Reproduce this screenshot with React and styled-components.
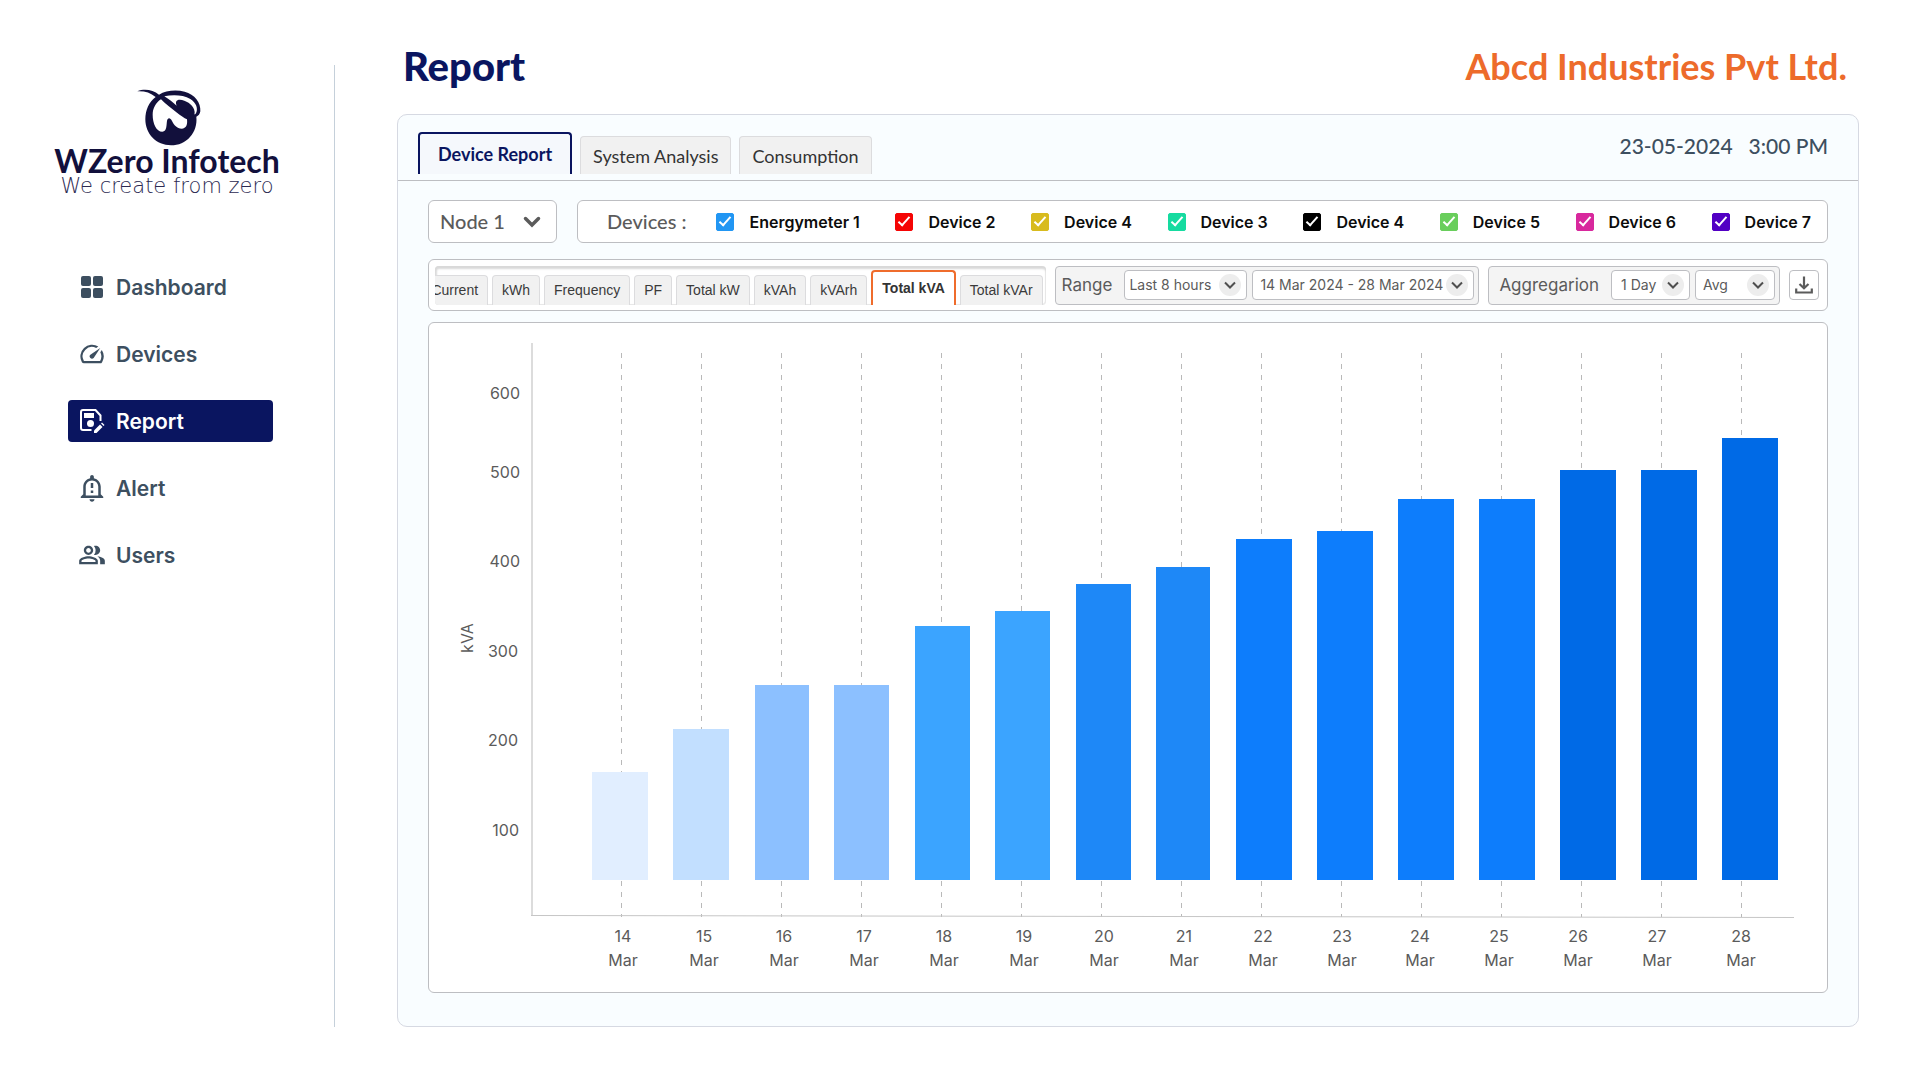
import React, { useState } from "react";
import styled, { createGlobalStyle, css } from "styled-components";
import {
  MdSpeed,
  MdOutlineNotificationImportant,
  MdOutlinePeopleAlt,
} from "react-icons/md";

const sans = `Inter, "Liberation Sans", sans-serif`;
const display = `Lato, "Liberation Sans", sans-serif`;
const navy = "#0a1560";
const slate = "#3d4f60";
const grey = "#5b5b5b";
const line = "#bdbec2";

const GlobalStyle = createGlobalStyle`
  *, *::before, *::after { box-sizing: border-box; }
  body { margin: 0; background: #fff; font-family: ${sans}; }
  button, select, input { font: inherit; margin: 0; }
`;

const Page = styled.div`
  display: flex;
  min-height: 100vh;
  padding: 0 61px 0 0;
`;

const Sidebar = styled.aside`
  flex: 0 0 335px;
  margin: 65px 0 54px;
  border-right: 1px solid #c5d0da;
`;

const Brand = styled.div`
  display: flex;
  flex-direction: column;
  align-items: center;
  padding-top: 17px;
  color: #12103c;
`;

const BrandName = styled.div`
  font: 700 32px/30px ${display};
`;

const BrandTagline = styled.div`
  font: 200 21px/20px "DejaVu Sans", sans-serif;
  color: #2c2a52;
`;

const Emblem = styled.svg`
  width: 80px;
  height: 64px;
  display: block;
`;

const Nav = styled.nav`
  display: flex;
  flex-direction: column;
  gap: 25px;
  margin: 70px 61px 0 68px;
`;

const NavLink = styled.a`
  display: flex;
  align-items: center;
  gap: 8px;
  height: 42px;
  padding: 0 8px;
  border-radius: 4px;
  font-size: 21px;
  font-weight: 600;
  text-decoration: none;
  color: ${(p) => (p.$active ? "#fff" : slate)};
  background: ${(p) => (p.$active ? navy : "transparent")};
`;

const IconSlot = styled.span`
  display: grid;
  place-items: center;
  width: 32px;
  height: 32px;
`;

const Main = styled.main`
  flex: 1;
  min-width: 0;
  display: flex;
  flex-direction: column;
  padding: 40px 0 54px 62px;
`;

const Header = styled.header`
  display: flex;
  justify-content: space-between;
  align-items: center;
  height: 52px;
  margin: 0 12px 22px 6px;
`;

const Title = styled.h1`
  margin: 0;
  font: 900 40px/52px ${display};
  color: ${navy};
`;

const Company = styled.div`
  font: 700 36px/52px ${display};
  color: #ed6b2b;
`;

const Panel = styled.section`
  flex: 1;
  border: 1px solid #d6d9e2;
  border-radius: 10px;
  background: #f9fdff;
`;

const PanelHead = styled.div`
  display: flex;
  justify-content: space-between;
  height: 66px;
  padding: 17px 30px 6px 20px;
  border-bottom: 1px solid ${line};
`;

const ReportTabs = styled.div`
  display: flex;
  align-items: flex-end;
  gap: 8px;
`;

const ReportTab = styled.button`
  height: 38px;
  padding: 0 12px;
  border: 1px solid #dcdcde;
  border-bottom: 0;
  border-radius: 4px 4px 0 0;
  background: #f1f1f1;
  color: #333;
  font: 400 18px/36px ${display};
  ${(p) =>
    p.$active &&
    css`
      height: 42px;
      padding: 0 18px;
      border: 2px solid ${navy};
      border-bottom: 0;
      background: #f5f8fc;
      color: ${navy};
      font-weight: 700;
    `}
`;

const Stamp = styled.time`
  display: flex;
  gap: 16px;
  font: 500 21px/28px ${display};
  color: ${slate};
`;

const PanelBody = styled.div`
  display: flex;
  flex-direction: column;
  padding: 19px 30px 33px;
`;

const FilterRow = styled.div`
  display: flex;
  gap: 20px;
  margin-bottom: 16px;
`;

const SelectBox = styled.div`
  position: relative;
  width: ${(p) => p.$width}px;
`;

const SelectField = styled.select`
  appearance: none;
  display: block;
  width: 100%;
  height: 30px;
  padding: 0 24px 0 ${(p) => p.$pad || 6}px;
  border: 1px solid ${line};
  border-radius: 4px;
  background: #fff;
  color: ${grey};
  font: 400 14px/28px ${sans};
`;

const NodeField = styled(SelectField)`
  height: 43px;
  padding: 0 32px 2px 11px;
  border-radius: 6px;
  font: 500 20px/40px ${display};
`;

const Arrow = styled.svg`
  position: absolute;
  top: 50%;
  right: ${(p) => p.$right}px;
  transform: translateY(-50%);
  pointer-events: none;
`;

const DeviceBar = styled.fieldset`
  flex: 1;
  display: flex;
  align-items: center;
  gap: 30px;
  height: 43px;
  margin: 0;
  padding: 0 16px 0 29px;
  border: 1px solid ${line};
  border-radius: 6px;
  background: #fff;
`;

const DeviceCaption = styled.span`
  padding-bottom: 2px;
  font: 500 20px/24px ${display};
  color: ${grey};
`;

const DeviceList = styled.div`
  flex: 1;
  display: flex;
  justify-content: space-between;
`;

const DeviceLabel = styled.label`
  display: flex;
  align-items: center;
  gap: 15px;
  font-size: 16px;
  font-weight: 600;
  line-height: 20px;
  color: #0c0c0c;
  white-space: nowrap;
`;

const Tick = styled.input`
  appearance: none;
  display: grid;
  place-content: center;
  width: 18px;
  height: 18px;
  border-radius: 2px;
  border: 1px solid ${(p) => p.$color};
  background: #fff;
  &:checked {
    background: ${(p) => p.$color};
  }
  &:checked::before {
    content: "";
    width: 6px;
    height: 12px;
    margin-bottom: 3px;
    border: solid #fff;
    border-width: 0 2px 2px 0;
    transform: rotate(42deg);
  }
`;

const Toolbar = styled.div`
  display: flex;
  align-items: center;
  gap: 9px;
  height: 52px;
  padding: 0 8px 0 6px;
  margin-bottom: 11px;
  border: 1px solid ${line};
  border-radius: 6px;
  background: #fff;
`;

const MetricStrip = styled.div`
  flex: 1;
  min-width: 0;
  display: flex;
  justify-content: flex-end;
  align-items: flex-end;
  gap: 4px;
  height: 39px;
  padding-right: 3px;
  overflow: hidden;
  border-radius: 4px;
  box-shadow: inset 0 3px 2px #d9d9d9, inset 2px 0 2px #dcdcdc,
    inset -1px -1px 0 #ececec;
`;

const MetricTab = styled.button`
  flex: none;
  height: 30px;
  padding: 0 9px;
  border: 1px solid #dcdcde;
  border-bottom: 0;
  border-radius: 4px 4px 0 0;
  background: #f1f1f1;
  color: #3a3a3a;
  font: 400 14px/28px "Liberation Sans", sans-serif;
  ${(p) =>
    p.$active &&
    css`
      height: 35px;
      border: 2px solid #ef6c2c;
      border-bottom: 0;
      background: #fff;
      color: #333;
      font-weight: 700;
    `}
`;

const Group = styled.div`
  display: flex;
  align-items: center;
  gap: 5px;
  height: 39px;
  padding: 0 4px 0 ${(p) => p.$pad}px;
  border: 1px solid ${line};
  border-radius: 4px;
  background: #f4f4f4;
`;

const GroupLabel = styled.label`
  margin-right: 7px;
  font-size: 17px;
  line-height: 20px;
  color: ${grey};
`;

const IconButton = styled.button`
  display: grid;
  place-items: center;
  width: 30px;
  height: 30px;
  padding: 0;
  border: 1px solid ${line};
  border-radius: 4px;
  background: #fff;
  color: ${grey};
`;

const ChartCard = styled.div`
  border: 1px solid ${line};
  border-radius: 6px;
  background: #fff;
`;

const ChartSvg = styled.svg`
  display: block;
  width: 100%;
  height: auto;
  font: 400 16px ${sans};
`;

function EmblemMark() {
  return (
    <Emblem viewBox="-8 0 240 192" aria-hidden="true">
      <path
        fill="currentColor"
        d="M23 28C45 19 70 24 88 38C108 25 140 22 165 29C195 37 214 62 212 88C211 96 206 102 200 104C205 152 170 190 124 190C80 190 47 156 47 112C47 84 58 60 78 45C62 32 45 27 23 28Z"
      />
      <path
        fill="#fff"
        d="M94 52C78 62 69 80 69 98C69 124 80 149 98 149C112 149 110 128 112 117C114 106 122 107 127 117C133 129 142 140 156 140C170 140 174 128 172 112C164 108 152 100 142 92C124 78 108 66 94 52Z"
      />
      <path
        fill="#fff"
        d="M104 43C128 38 160 38 182 51C200 62 206 80 199 94C196 99 193 98 195 93C196 78 182 62 164 56C154 52 142 52 140 58C138 62 139 67 141 71C130 62 118 51 104 43Z"
      />
    </Emblem>
  );
}

function DashboardIcon() {
  return (
    <svg width="22" height="22" viewBox="0 0 22 22" fill="currentColor">
      <rect x="0" y="0" width="10" height="10" rx="2" />
      <rect x="12" y="0" width="10" height="10" rx="2" />
      <rect x="0" y="12" width="10" height="10" rx="2" />
      <rect x="12" y="12" width="10" height="10" rx="2" />
    </svg>
  );
}

function ReportIcon() {
  return (
    <svg width="26" height="26" viewBox="0 0 26 26" fill="none">
      <path
        d="M12.500 22H4Q2 22 2 20V4Q2 2 4 2H16.500L21.500 7.500V13"
        stroke="currentColor"
        strokeWidth="2"
      />
      <rect x="5" y="5" width="10" height="5" fill="currentColor" />
      <circle cx="11.500" cy="15.500" r="3.500" fill="currentColor" />
      <path d="M15 22.500L21 16.500L23.500 19L17.500 25H15Z" fill="currentColor" />
      <path d="M22 15.500L23 14.500L25.500 17L24.500 18Z" fill="currentColor" />
    </svg>
  );
}

function RoundArrow() {
  return (
    <Arrow $right={6} width="22" height="22" viewBox="0 0 22 22" fill="none">
      <circle cx="11" cy="11" r="11" fill="#ededed" />
      <path d="M6 8.500L11 13.500L16 8.500" stroke="#4f4f4f" strokeWidth="2" />
    </Arrow>
  );
}

function DownloadIcon() {
  return (
    <svg width="18" height="18" viewBox="0 0 18 18" fill="none">
      <path
        d="M9 0.500V12M4.500 8L9 12.300L13.500 8M1.200 12.500V16.500H16.800V12.500"
        stroke="currentColor"
        strokeWidth="2.200"
      />
    </svg>
  );
}

const navItems = [
  { label: "Dashboard", icon: <DashboardIcon /> },
  { label: "Devices", icon: <MdSpeed size={28} /> },
  { label: "Report", icon: <ReportIcon /> },
  { label: "Alert", icon: <MdOutlineNotificationImportant size={30} /> },
  { label: "Users", icon: <MdOutlinePeopleAlt size={28} /> },
];

const devices = [
  ["Energymeter 1", "#2196f3"],
  ["Device 2", "#f50505"],
  ["Device 4", "#d8bb1e"],
  ["Device 3", "#16dba0"],
  ["Device 4", "#000000"],
  ["Device 5", "#69ce5c"],
  ["Device 6", "#d8289d"],
  ["Device 7", "#5200c4"],
];

const metrics = [
  "Current",
  "kWh",
  "Frequency",
  "PF",
  "Total kW",
  "kVAh",
  "kVArh",
  "Total kVA",
  "Total kVAr",
];

const yTicks = [
  [600, 91, 70],
  [500, 91, 149],
  [400, 91, 238],
  [300, 89, 328],
  [200, 89, 417],
  [100, 90, 507],
];

const baseline = 557;

/* day, left edge, width, top edge, label centre, fill */
const bars = [
  [14, 163, 56, 449, 194, "#e1eeff"],
  [15, 244, 56, 406, 275, "#c2dfff"],
  [16, 326, 54, 362, 355, "#8cc0ff"],
  [17, 405, 55, 362, 435, "#8cc0ff"],
  [18, 486, 55, 303, 515, "#3ba4ff"],
  [19, 566, 55, 288, 595, "#3ba4ff"],
  [20, 647, 55, 261, 675, "#1e88f7"],
  [21, 727, 54, 244, 755, "#1e88f7"],
  [22, 807, 56, 216, 834, "#0d7dfc"],
  [23, 888, 56, 208, 913, "#0d7dfc"],
  [24, 969, 56, 176, 991, "#0d7dfc"],
  [25, 1050, 56, 176, 1070, "#0d7dfc"],
  [26, 1131, 56, 147, 1149, "#006ae6"],
  [27, 1212, 56, 147, 1228, "#006ae6"],
  [28, 1293, 56, 115, 1312, "#006ae6"],
];

function Chart() {
  return (
    <ChartCard>
      <ChartSvg viewBox="0 0 1398 669" role="img" aria-label="Total kVA per day">
        {bars.map(([day], i) => (
          <path
            key={day}
            d={`M${192.500 + i * 80} 30V594`}
            stroke="#b9b9b9"
            strokeDasharray="5 6"
          />
        ))}
        <path d="M103 20V592" stroke="#dcdcdc" strokeWidth="2" />
        <path d="M102 592.500L1365 594.500" stroke="#c6c6c6" />
        {bars.map(([day, x, w, top, , fill]) => (
          <rect
            key={day}
            x={x}
            y={top}
            width={w}
            height={baseline - top}
            fill={fill}
          />
        ))}
        <g fill={grey}>
          {yTicks.map(([value, x, y]) => (
            <text key={value} x={x} y={y + 6} textAnchor="end">
              {value}
            </text>
          ))}
          <text textAnchor="middle" transform="translate(44 315) rotate(-90)">
            kVA
          </text>
          <g textAnchor="middle">
            {bars.map(([day, , , , cx]) => (
              <text key={day} y="619">
                <tspan x={cx}>{day}</tspan>
                <tspan x={cx} dy="24">
                  Mar
                </tspan>
              </text>
            ))}
          </g>
        </g>
      </ChartSvg>
    </ChartCard>
  );
}

function DropDown({ id, label, width, pad, option }) {
  return (
    <SelectBox $width={width}>
      <SelectField id={id} aria-label={label} $pad={pad}>
        <option>{option}</option>
      </SelectField>
      <RoundArrow />
    </SelectBox>
  );
}

export default function App() {
  const [metric, setMetric] = useState("Total kVA");

  return (
    <>
      <GlobalStyle />
      <Page>
        <Sidebar>
          <Brand>
            <EmblemMark />
            <BrandName>WZero Infotech</BrandName>
            <BrandTagline>We create from zero</BrandTagline>
          </Brand>
          <Nav>
            {navItems.map(({ label, icon }) => (
              <NavLink key={label} href="#" $active={label === "Report"}>
                <IconSlot>{icon}</IconSlot>
                {label}
              </NavLink>
            ))}
          </Nav>
        </Sidebar>

        <Main>
          <Header>
            <Title>Report</Title>
            <Company>Abcd Industries Pvt Ltd.</Company>
          </Header>

          <Panel>
            <PanelHead>
              <ReportTabs>
                <ReportTab $active>Device Report</ReportTab>
                <ReportTab>System Analysis</ReportTab>
                <ReportTab>Consumption</ReportTab>
              </ReportTabs>
              <Stamp dateTime="2024-05-23T15:00">
                <span>23-05-2024</span>
                <span>3:00 PM</span>
              </Stamp>
            </PanelHead>

            <PanelBody>
              <FilterRow>
                <SelectBox $width={129}>
                  <NodeField aria-label="Node">
                    <option>Node 1</option>
                  </NodeField>
                  <Arrow $right={16} width="18" height="12" viewBox="0 0 18 12" fill="none">
                    <path
                      d="M2.500 2.500L9 9L15.500 2.500"
                      stroke={grey}
                      strokeWidth="3.500"
                      strokeLinecap="round"
                    />
                  </Arrow>
                </SelectBox>
                <DeviceBar aria-label="Devices">
                  <DeviceCaption>Devices :</DeviceCaption>
                  <DeviceList>
                    {devices.map(([name, color], i) => (
                      <DeviceLabel key={i}>
                        <Tick type="checkbox" defaultChecked $color={color} />
                        {name}
                      </DeviceLabel>
                    ))}
                  </DeviceList>
                </DeviceBar>
              </FilterRow>

              <Toolbar>
                <MetricStrip>
                  {metrics.map((m) => (
                    <MetricTab
                      key={m}
                      $active={m === metric}
                      onClick={() => setMetric(m)}
                    >
                      {m}
                    </MetricTab>
                  ))}
                </MetricStrip>
                <Group $pad={6}>
                  <GroupLabel htmlFor="range">Range</GroupLabel>
                  <DropDown id="range" width={123} pad={4} option="Last 8 hours" />
                  <DropDown
                    label="Dates"
                    width={222}
                    pad={7}
                    option="14 Mar 2024 - 28 Mar 2024"
                  />
                </Group>
                <Group $pad={10}>
                  <GroupLabel htmlFor="aggregation">Aggregarion</GroupLabel>
                  <DropDown id="aggregation" width={79} pad={9} option="1 Day" />
                  <DropDown label="Function" width={80} pad={7} option="Avg" />
                </Group>
                <IconButton aria-label="Download">
                  <DownloadIcon />
                </IconButton>
              </Toolbar>

              <Chart />
            </PanelBody>
          </Panel>
        </Main>
      </Page>
    </>
  );
}
